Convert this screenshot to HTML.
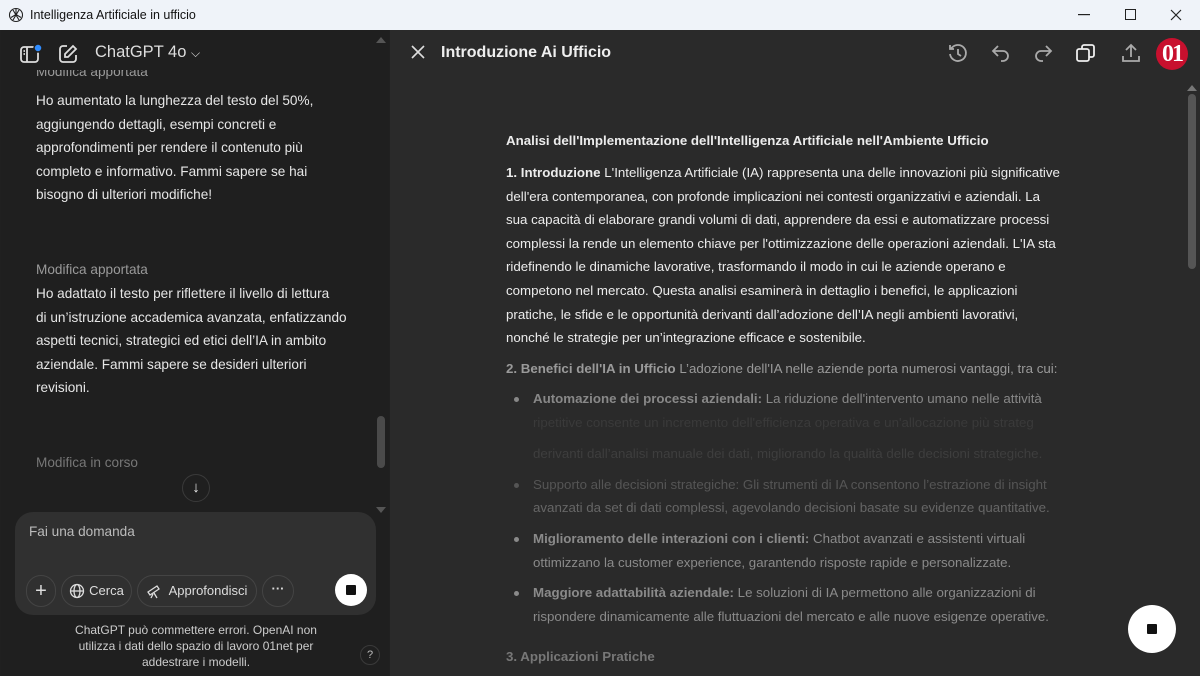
<!DOCTYPE html>
<html><head><meta charset="utf-8"><style>
*{margin:0;padding:0;box-sizing:border-box}
body{width:1200px;height:676px;overflow:hidden;background:#202020;font-family:"Liberation Sans",sans-serif;position:relative}
.tb{position:absolute;left:0;top:0;width:1200px;height:30px;background:#eff3f9;color:#111;font-size:12.5px}
.tb .t{position:absolute;left:30px;top:8px}
.left{position:absolute;left:1px;top:30px;width:388px;height:646px;background:#1f1f1f}
.right{position:absolute;left:390px;top:30px;width:810px;height:646px;background:#2a2a2a}
.p{position:absolute;color:#e6e6e6;font-size:13.6px;line-height:23.6px;white-space:nowrap}
.g{color:#9a9a9a}
.rt{position:absolute;left:116px;width:570px;color:#ececec;font-size:13.3px;line-height:23.6px}
.rt b{font-weight:bold}
ul{list-style:none;white-space:nowrap}
li{position:relative;padding-left:27px;margin-bottom:7px}
li:before{content:"";position:absolute;left:8px;top:10px;width:5px;height:5px;border-radius:50%;background:currentColor}
.btn{position:absolute;top:545px;height:32px;border:1px solid #444;border-radius:16px;color:#ddd;font-size:13px;line-height:30px;text-align:center}
svg{position:absolute}
</style></head><body>
<div class="tb">
<svg style="left:8px;top:7px" width="16" height="16" viewBox="0 0 16 16" fill="none" stroke="#222" stroke-width="1.1"><circle cx="8" cy="8" r="6.5"/><path d="M8 1.5v6l5 3M8 7.5l-5 3M5 3l6 10M11 3l-6 10"/></svg>
<span class="t">Intelligenza Artificiale in ufficio</span>
<svg style="left:1078px;top:14px" width="12" height="2"><rect width="12" height="1.2" fill="#222"/></svg>
<svg style="left:1125px;top:9px" width="11" height="11"><rect x=".5" y=".5" width="10" height="10" fill="none" stroke="#222"/></svg>
<svg style="left:1170px;top:9px" width="12" height="12" stroke="#222" stroke-width="1.2"><path d="M1 1l10 10M11 1L1 11"/></svg>
</div>
<div class="left">
<svg style="left:18px;top:13px" width="24" height="22" fill="none" stroke="#ddd" stroke-width="1.8"><rect x="2" y="4" width="17" height="15" rx="3"/><path d="M8 4v15M4.5 8h1.5M4.5 11h1.5"/><circle cx="19" cy="5" r="4" fill="#2f8cff" stroke="#1f1f1f" stroke-width="1.5"/></svg>
<svg style="left:56px;top:13px" width="22" height="22" fill="none" stroke="#ddd" stroke-width="1.8"><path d="M10 3H6a3 3 0 0 0-3 3v10a3 3 0 0 0 3 3h10a3 3 0 0 0 3-3v-4"/><path d="M16 3l3 3-8 8H8v-3z"/></svg>
<div class="p" style="left:94px;top:11px;font-size:16.5px;color:#ddd">ChatGPT 4o <span style="font-size:12px">⌵</span></div>
<div class="p g" style="left:35px;top:40px;height:14px;overflow:hidden"><div style="margin-top:-10px">Modifica apportata</div></div>
<div class="p" style="left:35px;top:59px">Ho aumentato la lunghezza del testo del 50%,<br>aggiungendo dettagli, esempi concreti e<br>approfondimenti per rendere il contenuto più<br>completo e informativo. Fammi sapere se hai<br>bisogno di ulteriori modifiche!</div>
<div class="p g" style="left:35px;top:228px">Modifica apportata</div>
<div class="p" style="left:35px;top:252px">Ho adattato il testo per riflettere il livello di lettura<br>di un’istruzione accademica avanzata, enfatizzando<br>aspetti tecnici, strategici ed etici dell’IA in ambito<br>aziendale. Fammi sapere se desideri ulteriori<br>revisioni.</div>
<div class="p" style="left:35px;top:421px;color:#777">Modifica in corso</div>
<div style="position:absolute;left:181px;top:444px;width:28px;height:28px;border:1px solid #3a3a3a;border-radius:50%;color:#eee;text-align:center;line-height:26px;font-size:15px">↓</div>
<div style="position:absolute;left:375px;top:2px;width:0;height:0;border:5px solid transparent;border-bottom:6px solid #555"></div>
<div style="position:absolute;left:376px;top:386px;width:8px;height:52px;border-radius:4px;background:#4a4a4a"></div>
<div style="position:absolute;left:375px;top:477px;border:5px solid transparent;border-top:6px solid #555"></div>
<div style="position:absolute;left:14px;top:482px;width:361px;height:103px;border-radius:18px;background:#303030"></div>
<div class="p" style="left:28px;top:490px;color:#bbb">Fai una domanda</div>
<div class="btn" style="left:25px;width:30px;font-size:20px">+</div>
<div class="btn" style="left:60px;width:71px;padding-left:20px">Cerca</div>
<svg style="left:68px;top:553px" width="16" height="16" fill="none" stroke="#ddd" stroke-width="1.3"><circle cx="8" cy="8" r="6.5"/><ellipse cx="8" cy="8" rx="3" ry="6.5"/><path d="M1.5 8h13"/></svg>
<div class="btn" style="left:136px;width:120px;padding-left:22px">Approfondisci</div>
<svg style="left:145px;top:553px" width="16" height="16" fill="none" stroke="#ddd" stroke-width="1.3"><path d="M2 9l9-6 2 3-9 6zM7 11l-2 4M8 10l3 5"/></svg>
<div class="btn" style="left:261px;width:32px;font-weight:bold;line-height:26px">···</div>
<div style="position:absolute;left:334px;top:544px;width:32px;height:32px;border-radius:50%;background:#fff"><div style="position:absolute;left:11px;top:11px;width:10px;height:10px;background:#111;border-radius:1px"></div></div>
<div class="p" style="left:60px;top:592px;width:270px;white-space:normal;text-align:center;font-size:12px;line-height:16px;color:#ccc">ChatGPT può commettere errori. OpenAI non utilizza i dati dello spazio di lavoro 01net per addestrare i modelli.</div>
<div style="position:absolute;left:359px;top:615px;width:20px;height:20px;border:1px solid #3a3a3a;border-radius:50%;color:#bbb;font-size:11px;text-align:center;line-height:18px">?</div>
</div>
<div class="right">
<svg style="left:21px;top:15px" width="14" height="14" stroke="#ddd" stroke-width="1.6"><path d="M1 1l12 12M13 1L1 13"/></svg>
<div class="p" style="left:51px;top:11px;font-size:16px;font-weight:bold;color:#eee">Introduzione Ai Ufficio</div>
<svg style="left:557px;top:12px" width="22" height="22" fill="none" stroke="#aaa" stroke-width="1.8"><path d="M4 7a8 8 0 1 1-1 5M3 3v4h4M11 7v5l3 2"/></svg>
<svg style="left:600px;top:12px" width="22" height="22" fill="none" stroke="#aaa" stroke-width="1.8"><path d="M8 4L3 9l5 5M3 9h10a5 5 0 0 1 0 10h-2"/></svg>
<svg style="left:642px;top:12px" width="22" height="22" fill="none" stroke="#aaa" stroke-width="1.8"><path d="M14 4l5 5-5 5M19 9H9a5 5 0 0 0 0 10h2"/></svg>
<svg style="left:685px;top:12px" width="22" height="22" fill="none" stroke="#eee" stroke-width="1.8"><rect x="2" y="7" width="12" height="12" rx="2"/><path d="M7 7V5a2 2 0 0 1 2-2h8a2 2 0 0 1 2 2v8a2 2 0 0 1-2 2h-3"/></svg>
<svg style="left:730px;top:12px" width="22" height="22" fill="none" stroke="#aaa" stroke-width="1.8"><path d="M11 15V3M6 8l5-5 5 5M3 14v5h16v-5"/></svg>
<div style="position:absolute;left:766px;top:8px;width:32px;height:32px;border-radius:50%;background:#c8102e;color:#fff;font-family:'Liberation Serif',serif;font-weight:bold;font-size:24px;text-align:center;line-height:32px;letter-spacing:-2px">01</div>
<div style="position:absolute;left:797px;top:50px;border:5px solid transparent;border-bottom:6px solid #777"></div>
<div style="position:absolute;left:798px;top:64px;width:8px;height:175px;border-radius:4px;background:#555"></div>
<div class="rt" style="top:99px;width:600px"><b>Analisi dell'Implementazione dell'Intelligenza Artificiale nell'Ambiente Ufficio</b></div>
<div class="rt" style="top:131px;width:620px;white-space:nowrap"><b>1. Introduzione</b> L'Intelligenza Artificiale (IA) rappresenta una delle innovazioni più significative<br>dell'era contemporanea, con profonde implicazioni nei contesti organizzativi e aziendali. La<br>sua capacità di elaborare grandi volumi di dati, apprendere da essi e automatizzare processi<br>complessi la rende un elemento chiave per l'ottimizzazione delle operazioni aziendali. L'IA sta<br>ridefinendo le dinamiche lavorative, trasformando il modo in cui le aziende operano e<br>competono nel mercato. Questa analisi esaminerà in dettaglio i benefici, le applicazioni<br>pratiche, le sfide e le opportunità derivanti dall’adozione dell’IA negli ambienti lavorativi,<br>nonché le strategie per un’integrazione efficace e sostenibile.</div>
<div class="rt" style="top:327px;width:600px;color:#9a9a9a"><b>2. Benefici dell'IA in Ufficio</b> L’adozione dell'IA nelle aziende porta numerosi vantaggi, tra cui:</div>
<div class="rt" style="top:357px;width:600px">
<ul>
<li style="color:#888"><b>Automazione dei processi aziendali:</b> La riduzione dell'intervento umano nelle attività<br><span style="color:#3a3a3a">ripetitive consente un incremento dell'efficienza operativa e un'allocazione più strateg</span><br><span style="color:#3e3e3e;display:block;margin-top:8px">derivanti dall’analisi manuale dei dati, migliorando la qualità delle decisioni strategiche.</span></li>
<li style="color:#555">Supporto alle decisioni strategiche: Gli strumenti di IA consentono l’estrazione di insight<br><span style="color:#666">avanzati da set di dati complessi, agevolando decisioni basate su evidenze quantitative.</span></li>
<li style="color:#8a8a8a"><b>Miglioramento delle interazioni con i clienti:</b> Chatbot avanzati e assistenti virtuali<br>ottimizzano la customer experience, garantendo risposte rapide e personalizzate.</li>
<li style="color:#8a8a8a"><b>Maggiore adattabilità aziendale:</b> Le soluzioni di IA permettono alle organizzazioni di<br>rispondere dinamicamente alle fluttuazioni del mercato e alle nuove esigenze operative.</li>
</ul></div>
<div class="rt" style="top:615px;color:#777"><b>3. Applicazioni Pratiche</b></div>
<div style="position:absolute;left:738px;top:575px;width:48px;height:48px;border-radius:50%;background:#fff"><div style="position:absolute;left:19px;top:19px;width:10px;height:10px;background:#111;border-radius:1px"></div></div>
</div>
</body></html>
